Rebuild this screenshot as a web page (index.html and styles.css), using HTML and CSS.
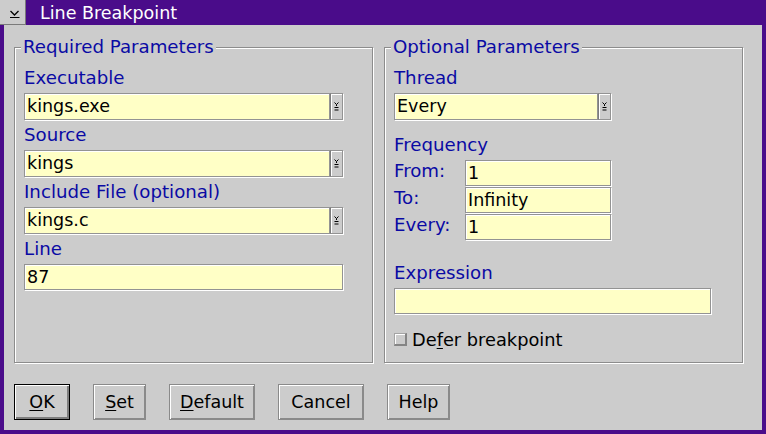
FILE: index.html
```html
<!DOCTYPE html>
<html>
<head>
<meta charset="utf-8">
<title>Line Breakpoint</title>
<link rel="stylesheet" href="styles.css">
</head>
<body>
<div class="window">
  <div class="titlebar">
    <div class="sysmenu">
      <svg width="25" height="24" viewBox="0 0 25 24"><path d="M10.5 11 L14.5 15 L18.5 11" fill="none" stroke="#000" stroke-width="1.3"/><path d="M10 17.5 H19.5" stroke="#000" stroke-width="1"/></svg>
    </div>
    <div class="title">Line Breakpoint</div>
  </div>
  <div class="client">
    <div class="groups">
      <div class="group">
        <div class="legend">Required Parameters</div>
        <div class="label">Executable</div>
        <div class="combo combo-left"><div class="field">kings.exe</div><div class="drop"><svg width="5" height="9" viewBox="0 0 5 9"><path d="M0.5 0.5 L2.5 2.5 L4.5 0.5" fill="none" stroke="#000" stroke-width="1"/><path d="M2.5 2.5 V4 M0.5 5.5 H4.5 M0.5 8 H4.5" stroke="#000" stroke-width="1"/></svg></div></div>
        <div class="label">Source</div>
        <div class="combo combo-left"><div class="field">kings</div><div class="drop"><svg width="5" height="9" viewBox="0 0 5 9"><path d="M0.5 0.5 L2.5 2.5 L4.5 0.5" fill="none" stroke="#000" stroke-width="1"/><path d="M2.5 2.5 V4 M0.5 5.5 H4.5 M0.5 8 H4.5" stroke="#000" stroke-width="1"/></svg></div></div>
        <div class="label">Include File (optional)</div>
        <div class="combo combo-left"><div class="field">kings.c</div><div class="drop"><svg width="5" height="9" viewBox="0 0 5 9"><path d="M0.5 0.5 L2.5 2.5 L4.5 0.5" fill="none" stroke="#000" stroke-width="1"/><path d="M2.5 2.5 V4 M0.5 5.5 H4.5 M0.5 8 H4.5" stroke="#000" stroke-width="1"/></svg></div></div>
        <div class="label">Line</div>
        <div class="entry entry-line">87</div>
      </div>
      <div class="group">
        <div class="legend">Optional Parameters</div>
        <div class="label">Thread</div>
        <div class="combo combo-right"><div class="field">Every</div><div class="drop"><svg width="5" height="9" viewBox="0 0 5 9"><path d="M0.5 0.5 L2.5 2.5 L4.5 0.5" fill="none" stroke="#000" stroke-width="1"/><path d="M2.5 2.5 V4 M0.5 5.5 H4.5 M0.5 8 H4.5" stroke="#000" stroke-width="1"/></svg></div></div>
        <div class="label label-freq">Frequency</div>
        <div class="freq-row"><div class="freq-label">From:</div><div class="entry entry-freq">1</div></div>
        <div class="freq-row"><div class="freq-label">To:</div><div class="entry entry-freq">Infinity</div></div>
        <div class="freq-row"><div class="freq-label">Every:</div><div class="entry entry-freq">1</div></div>
        <div class="label label-expr">Expression</div>
        <div class="entry entry-expr"></div>
        <div class="check-row"><div class="checkbox"></div><div class="check-text">De<u>f</u>er breakpoint</div></div>
      </div>
    </div>
    <div class="buttons">
      <div class="btn btn-default btn-ok"><u>O</u>K</div>
      <div class="btn btn-set"><u>S</u>et</div>
      <div class="btn btn-def"><u>D</u>efault</div>
      <div class="btn btn-cancel">Cancel</div>
      <div class="btn btn-help">Help</div>
    </div>
  </div>
</div>
</body>
</html>
```

FILE: styles.css
```css
html, body {
  margin: 0;
  padding: 0;
}
body {
  width: 766px;
  height: 434px;
  overflow: hidden;
  background: #4a0c8a;
  font-family: "DejaVu Sans", "Liberation Sans", sans-serif;
}
.window {
  width: 766px;
  height: 434px;
  display: flex;
  flex-direction: column;
}
.titlebar {
  height: 25px;
  display: flex;
  align-items: center;
}
.sysmenu {
  width: 26px;
  height: 25px;
  box-sizing: border-box;
  background: #cccccc;
  border-right: 1px solid #7a7a7a;
  border-bottom: 1px solid #7a7a7a;
}
.sysmenu svg {
  display: block;
}
.title {
  color: #ffffff;
  font-size: 17.5px;
  margin-left: 14px;
}
.client {
  margin: 0 4px;
  height: 405px;
  box-sizing: border-box;
  background: #cccccc;
  padding: 22px 0 0 10px;
}
.groups {
  display: flex;
  gap: 11px;
}
.group {
  position: relative;
  width: 359px;
  height: 316px;
  box-sizing: border-box;
  border: 1px solid #8c8c8c;
  box-shadow: inset 1px 1px 0 #ffffff, 1px 1px 0 #ffffff;
  padding: 15px 0 0 9px;
}
.legend {
  position: absolute;
  left: 6px;
  top: -12px;
  line-height: 22px;
  padding: 0 2px;
  background: #cccccc;
  color: #0a0aa4;
  font-size: 18.2px;
}
.label {
  height: 30px;
  line-height: 30px;
  color: #0a0aa4;
  font-size: 18.2px;
}
.label-freq {
  margin-top: 10px;
}
.label-expr {
  margin-top: 18px;
}
.combo {
  display: flex;
  height: 27px;
  box-shadow: 1px 1px 0 #ffffff;
}
.combo-left {
  width: 319px;
}
.combo-right {
  width: 217px;
}
.field, .entry {
  box-sizing: border-box;
  border: 1px solid #939393;
  background: #ffffc6;
  box-shadow: inset 1px 1px 0 #ffffff;
  font-size: 17.5px;
  color: #000000;
  padding-left: 2px;
}
.field {
  flex: 1;
  line-height: 25px;
}
.drop {
  width: 13px;
  box-sizing: border-box;
  background: #cccccc;
  border: 1px solid #939393;
  border-left-color: #7c7c7c;
  box-shadow: inset 1px 1px 0 #ffffff;
  display: flex;
  align-items: center;
  justify-content: center;
}
.drop svg {
  display: block;
}
.entry {
  height: 26px;
  line-height: 24px;
}
.entry.entry-line, .entry.entry-freq, .entry.entry-expr {
  box-shadow: inset 1px 1px 0 #ffffff, 1px 1px 0 #ffffff;
}
.entry-line {
  width: 319px;
}
.entry-freq {
  width: 146px;
}
.entry-expr {
  width: 317px;
}
.freq-row {
  display: flex;
  height: 26px;
  margin-bottom: 1px;
}
.freq-label {
  width: 71px;
  line-height: 22px;
  color: #0a0aa4;
  font-size: 18.2px;
}
.check-row {
  display: flex;
  align-items: center;
  height: 20px;
  margin-top: 15px;
}
.checkbox {
  width: 13px;
  height: 13px;
  box-sizing: border-box;
  background: #cccccc;
  border: 1px solid #a4a4a4;
  border-right: 2px solid #858585;
  border-bottom: 2px solid #858585;
  box-shadow: inset 1px 1px 0 #ffffff;
}
.check-text {
  margin-left: 5px;
  font-size: 17.8px;
  color: #000000;
}
.check-text u, .btn u {
  text-underline-offset: 2px;
}
.buttons {
  display: flex;
  gap: 23px;
  margin-top: 21px;
}
.btn {
  box-sizing: border-box;
  height: 36px;
  border: 1px solid #8a8a8a;
  background: #cccccc;
  box-shadow: inset 1px 1px 0 #ffffff, inset -1px -1px 0 #8a8a8a;
  font-size: 17.5px;
  line-height: 34px;
  text-align: center;
  color: #000000;
}
.btn-default {
  border: 1px solid #000000;
  box-shadow: inset 1px 1px 0 #ffffff, inset -2px -2px 0 #7e7e7e;
}
.btn-ok { width: 56px; }
.btn-set { width: 53px; }
.btn-def { width: 86px; }
.btn-cancel { width: 86px; }
.btn-help { width: 63px; }
```
